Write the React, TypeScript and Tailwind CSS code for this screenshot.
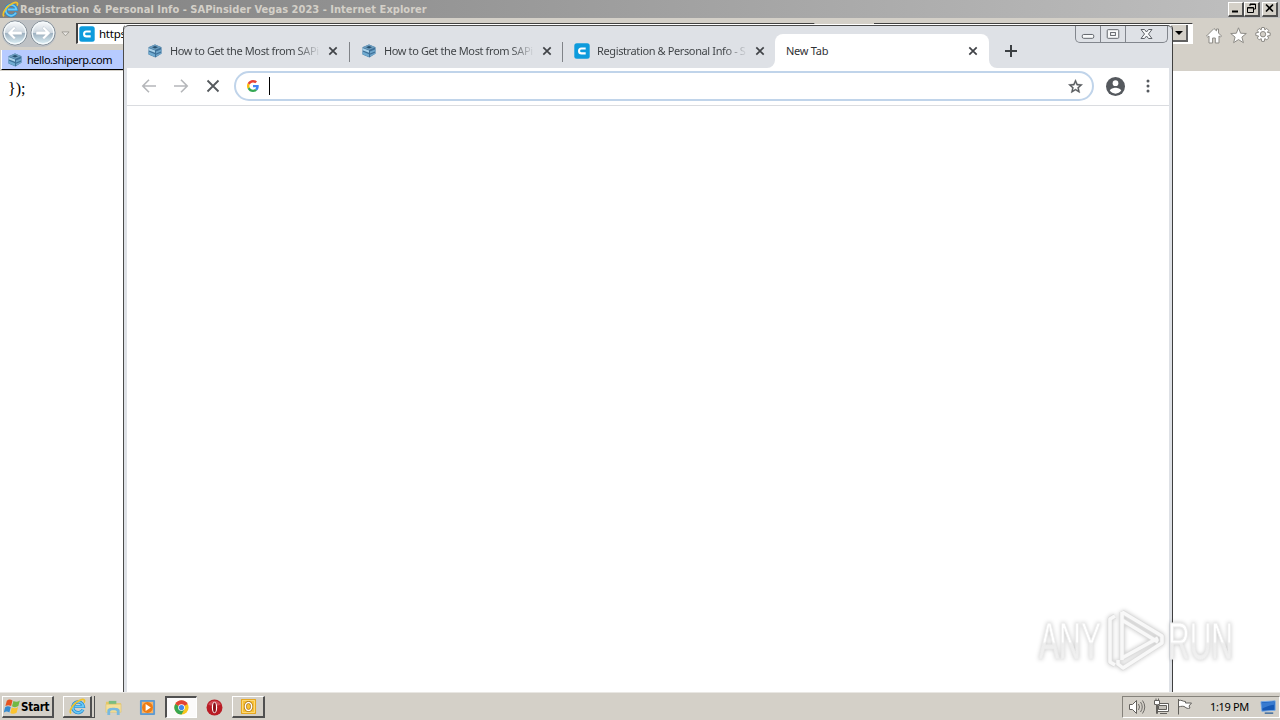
import React from "react";

function Cube() {
  return (
    <svg viewBox="0 0 16 16" className="h-4 w-4 shrink-0">
      <path d="M8 1.500l6.500 2.700v6.400L8.500 14.500 1.500 11.500V4.300z" fill="#3d7098" />
      <path d="M8 1.500l6.500 2.700L8 6.900 1.500 4.300z" fill="#6c9cbe" />
      <path d="M5 4.200l3-1.200 3 1.200-3 1.200z" fill="#27506f" />
      <path d="M1.500 5l6.500 2.600v2.200L1.500 7.200z" fill="#a9d2ea" />
      <path d="M1.500 8.600L8 11.200v2.700l-6.500-2.600z" fill="#6faad0" />
      <path d="M9 8.600l5.500-2.300v1.900L9 10.500zM9 11.800l5.500-2.300v1.300L9 13.800z" fill="#6fa5ca" />
    </svg>
  );
}

function CventIcon() {
  return (
    <svg viewBox="0 0 16 16" className="h-4 w-4 shrink-0">
      <rect x=".3" y=".3" width="15.4" height="15.4" rx="2.5" fill="#0d9bdc" />
      <path d="M11.700 5.500H7.500a2.400 2.400 0 0 0 0 4.900h4.200" fill="none" stroke="#fff" strokeWidth="2.100" />
    </svg>
  );
}

function IeLogo({ className }: { className: string }) {
  return (
    <svg viewBox="0 0 18 18" className={className}>
      <path d="M14.800 12.300a5.700 5.700 0 1 1 .5-3.300H6" fill="none" stroke="#2389cf" strokeWidth="3.400" />
      <path d="M14.800 12.300a5.700 5.700 0 1 1 .5-3.300H6" fill="none" stroke="#6bc9f5" strokeWidth="2" />
      <path d="M2.200 16.300C-1 13.500 5.500 4.500 12 2c4-1.500 5.500.3 3.800 3" fill="none" stroke="#f0c22b" strokeWidth="1.700" />
    </svg>
  );
}

function CloseX() {
  return (
    <svg viewBox="0 0 10 10" className="h-2.5 w-2.5 shrink-0">
      <path d="M1.300 1.300l7.400 7.400M8.700 1.300L1.300 8.700" stroke="#404347" strokeWidth="1.700" />
    </svg>
  );
}

function NavButton({ flip }: { flip?: boolean }) {
  return (
    <svg viewBox="0 0 26 26" className={flip ? "h-[26px] w-[26px] -scale-x-100" : "h-[26px] w-[26px]"}>
      <defs>
        <linearGradient id="nav" x1="0" y1="0" x2="0" y2="1">
          <stop offset="0" stopColor="#fbfcfd" />
          <stop offset=".48" stopColor="#cfd8e0" />
          <stop offset=".52" stopColor="#9fb2c1" />
          <stop offset="1" stopColor="#e3f6fb" />
        </linearGradient>
      </defs>
      <circle cx="13" cy="13" r="12" fill="url(#nav)" stroke="#818b94" />
      <circle cx="13" cy="13" r="10.800" fill="none" stroke="#f5fafc" strokeWidth="1.200" />
      <path d="M5.500 13L12 6.500l1.800 1.800-3 3H20v3.400h-9.200l3 3L12 19.500z" fill="#fff" stroke="#a5b4c0" strokeWidth=".4" />
    </svg>
  );
}

function TitleButton({ children }: { children: React.ReactNode }) {
  return (
    <div className="flex h-[15px] w-4 items-center justify-center border-t border-r-2 border-b-2 border-l border-t-white border-r-[#505050] border-b-[#505050] border-l-white bg-[#d4d0c8]">
      <svg viewBox="0 0 12 11" className="h-[11px] w-3 shrink-0" fill="none" stroke="#000">
        {children}
      </svg>
    </div>
  );
}

function ExplorerWindow() {
  return (
    <div className="flex h-[692px] flex-col bg-white">
      <div className="flex h-[18px] items-center bg-linear-to-r from-[#808080] to-[#c0c0c0] pr-[2px] pl-[2px]">
        <IeLogo className="h-[17px] w-[17px]" />
        <span className="ml-px whitespace-nowrap pt-[2px] font-['DejaVu_Sans_Condensed','DejaVu_Sans',sans-serif] text-[11px] leading-4 font-bold tracking-[0.03px] text-[#d4d0c8]">
          Registration &amp; Personal Info - SAPinsider Vegas 2023 - Internet Explorer
        </span>
        <div className="ml-auto flex">
          <TitleButton><path d="M2 8.500h6" strokeWidth="2" /></TitleButton>
          <TitleButton>
            <path d="M4 3V1h5.500v5H8M4 1.500h5.500" />
            <path d="M1.500 4.500h6v5h-6zM1.500 5h6" />
          </TitleButton>
          <div className="ml-[2px]">
            <TitleButton><path d="M2 1.500l7 7M9 1.500l-7 7" strokeWidth="1.700" /></TitleButton>
          </div>
        </div>
      </div>

      <div className="h-[53px] bg-[#d4d0c8]">
        <div className="flex h-8 items-start pt-[2px] pl-[2px]">
          <div className="flex h-[27px] gap-[2px] rounded-full bg-[#bfc2c5]">
            <NavButton />
            <NavButton flip />
          </div>
          <svg viewBox="0 0 10 6" className="mt-[11px] ml-[5px] h-[6px] w-[9px] shrink-0">
            <path d="M1 .7h8L5 5z" fill="#e8e6e2" stroke="#96938c" strokeWidth=".9" />
          </svg>
          {/* Address box, page tabs, search box */}
          <div className="mt-[3px] ml-[6px] flex h-[21px] w-[739px] shrink-0 items-center border-t border-r border-b border-l-2 border-t-[#404040] border-r-white border-b-white border-l-[#404040] bg-white">
            <span className="ml-px flex"><CventIcon /></span>
            <span className="ml-1 font-['Noto_Sans',sans-serif] text-[11.500px] tracking-[-0.250px] text-black">https</span>
          </div>
          <div className="mt-[4px] ml-px h-5 w-[26px] shrink-0 border-t border-[#f4f4f2] bg-[#bcd3ee]" />
          <div className="mt-[4px] ml-1 h-5 w-[22px] shrink-0 rounded-t-sm border-t border-[#faf9f8] bg-[#dedbd4]" />
          <div className="mt-[3px] ml-[6px] flex h-[21px] w-[319px] shrink-0 items-center border-t border-r border-b border-l-2 border-t-[#404040] border-r-white border-b-white border-l-[#404040] bg-white">
            <div className="mr-[4px] ml-auto flex h-[17px] w-4 items-center justify-center border-r-2 border-b-2 border-r-[#606060] border-b-[#606060] bg-[#d4d0c8]">
              <svg viewBox="0 0 8 4" className="h-1 w-2"><path d="M0 0h8L4 4z" /></svg>
            </div>
          </div>
          <svg viewBox="0 0 70 20" className="mt-[6px] ml-[12px] h-5 w-[70px] shrink-0" fill="#fff" stroke="#8d8b86">
            <path d="M1.500 10L9 2.500l2.500 2.400V3h2v4l3 3-1 1-1.500-1v7h-3.700v-5H7.600v5H4v-7l-1.400 1z" />
            <path d="M33.500 1.800l2.100 5.400 5.700.3-4.400 3.600 1.500 5.600-4.900-3.100-4.900 3.100 1.500-5.600-4.400-3.600 5.700-.3z" />
            <path d="M56.700 1.500h2.600l.5 2.300 2-1.300 1.900 1.900-1.300 2 2.800.5v2.600l-2.800.5 1.300 2-1.900 1.900-2-1.300-.5 2.800h-2.600l-.5-2.800-2 1.300-1.900-1.900 1.300-2-2.800-.5V6.900l2.800-.5-1.300-2 1.900-1.900 2 1.300z" />
            <circle cx="58" cy="8.200" r="2.700" fill="#d4d0c8" />
          </svg>
        </div>
        <div className="ml-px flex h-5 w-[200px] items-center border-b border-l border-black border-l-white bg-[#b7cbff] pl-[5px]">
          <Cube />
          <span className="ml-1 pt-px font-['Noto_Sans',sans-serif] text-[11px] tracking-[-0.450px] text-black">hello.shiperp.com</span>
        </div>
      </div>
      <p className="pt-[8px] pl-2 font-['Liberation_Serif',serif] text-base leading-5 text-black">{"});"}</p>
    </div>
  );
}

interface TabProps {
  title: string;
  icon: React.ReactNode;
  className: string;
}

function ChromeTab({ title, icon, className }: TabProps) {
  return (
    <div className={`flex items-center ${className}`}>
      {icon}
      <span className="ml-[7px] w-[151px] whitespace-nowrap bg-linear-to-r from-[#3c4043] from-84% to-transparent bg-clip-text font-['Noto_Sans',sans-serif] text-[11px] tracking-[-0.380px] text-transparent">
        {title}
      </span>
      <span className="ml-[7px] flex"><CloseX /></span>
    </div>
  );
}

function ChromeWindow() {
  return (
    <div className="absolute top-[24px] left-[123px] flex h-[668px] w-[1050px] flex-col rounded-t-[5px] border-t border-r border-l border-t-white border-r-[#3f3f3f] border-l-[#4b4b4b] bg-[#dee1e6]">
      <div className="flex h-[43px] items-end rounded-t-[5px] border-t border-[#4b4b4b]">
        <ChromeTab className="ml-[23px] h-[34px] w-[202px]" icon={<Cube />} title="How to Get the Most from SAPi" />
        <div className="mb-[6px] h-5 w-px bg-[#808388]" />
        <ChromeTab className="ml-[11px] h-[34px] w-[201px]" icon={<Cube />} title="How to Get the Most from SAPi" />
        <div className="mb-[6px] h-5 w-px bg-[#808388]" />
        <ChromeTab className="ml-[11px] h-[34px] w-[193px]" icon={<CventIcon />} title="Registration & Personal Info - S" />
        <svg viewBox="0 0 8 8" className="h-2 w-2 shrink-0"><path d="M8 0v8H0a8 8 0 0 0 8-8z" fill="#fff" /></svg>
        <div className="flex h-[34px] w-[214px] items-center justify-between rounded-t-lg bg-white pr-[11px] pl-[11px]">
          <span className="font-['Noto_Sans',sans-serif] text-[11px] tracking-[-0.250px] text-[#303236]">New Tab</span>
          <CloseX />
        </div>
        <svg viewBox="0 0 8 8" className="h-2 w-2 shrink-0"><path d="M0 0v8h8a8 8 0 0 1-8-8z" fill="#fff" /></svg>
        <svg viewBox="0 0 12 12" className="mb-[11px] ml-2 h-3 w-3"><path d="M6 0v12M0 6h12" stroke="#3c4043" strokeWidth="2" /></svg>
      </div>

      <div className="mr-[3px] ml-[3px] flex h-[38px] items-center border-b border-[#dadce0] bg-white pb-px pl-[14px]">
        <svg viewBox="0 0 80 16" className="h-4 w-20 shrink-0" fill="none" strokeWidth="1.600">
          <path d="M15 8H2M8 1.800L1.800 8 8 14.200M33 8h13M40 1.800L46.200 8 40 14.200" stroke="#b5b7ba" />
          <path d="M66.500 2.500l11 11M77.500 2.500l-11 11" stroke="#55595d" strokeWidth="1.800" />
        </svg>
        <div className="ml-[13px] flex h-[30px] w-[860px] shrink-0 items-center rounded-full border-2 border-[#c0d4ea] bg-white pr-[8px] pl-[11px]">
          <svg viewBox="0 0 48 48" className="h-[12px] w-[12px]">
            <path fill="#EA4335" d="M24 9.500c3.500 0 6.700 1.200 9.200 3.600l6.900-6.900C35.900 2.400 30.500 0 24 0 14.600 0 6.500 5.400 2.600 13.200l8 6.200C12.400 13.700 17.700 9.500 24 9.500z" />
            <path fill="#4285F4" d="M47 24.600c0-1.600-.2-3.100-.4-4.600H24v9h12.900c-.6 3-2.200 5.500-4.700 7.200l7.700 6C44.400 38 47 31.800 47 24.600z" />
            <path fill="#FBBC05" d="M10.500 28.600c-.5-1.500-.8-3-.8-4.600s.3-3.100.8-4.600l-8-6.200C.9 16.500 0 20.100 0 24s.9 7.500 2.600 10.800z" />
            <path fill="#34A853" d="M24 48c6.500 0 11.900-2.100 15.900-5.800l-7.700-6c-2.200 1.500-4.900 2.300-8.200 2.300-6.300 0-11.600-4.200-13.500-9.900l-8 6.200C6.500 42.600 14.600 48 24 48z" />
          </svg>
          <div className="ml-[10px] h-[18px] w-px bg-black" />
          <svg viewBox="0 0 24 24" className="ml-auto h-[17px] w-[17px]" fill="#55595d" stroke="#55595d" strokeWidth=".5">
            <path d="M22 9.240l-7.190-.62L12 2 9.190 8.630 2 9.240l5.460 4.730L5.820 21 12 17.270 18.180 21l-1.630-7.030L22 9.240zM12 15.400l-3.760 2.270 1-4.280-3.320-2.880 4.380-.38L12 6.100l1.710 4.040 4.380.38-3.320 2.880 1 4.280L12 15.400z" />
          </svg>
        </div>
        <svg viewBox="0 0 20 20" className="ml-[12px] h-[19px] w-[19px] shrink-0">
          <circle cx="10" cy="10" r="10" fill="#55595e" />
          <circle cx="10" cy="6.500" r="3" fill="#fff" />
          <path d="M4 14.300c.2-2 4-3.100 6-3.100s5.800 1.100 6 3.100a7.200 7.200 0 0 1-12 0z" fill="#fff" />
        </svg>
        <svg viewBox="0 0 4 14" className="ml-[21px] h-[14px] w-1 shrink-0" fill="#55595e">
          <circle cx="2" cy="2" r="1.500" />
          <circle cx="2" cy="7" r="1.500" />
          <circle cx="2" cy="12" r="1.500" />
        </svg>
      </div>
      <div className="mr-[3px] ml-[3px] flex-1 bg-white" />

      {/* Caption buttons sit over the tab strip */}
      <div className="absolute top-px right-[4px] flex h-[17px] w-[93px] rounded-b-[5px] border-r border-b border-l border-[#82868d] [&>svg]:h-4">
        <svg viewBox="0 0 25 16" className="w-[25px] border-r border-[#82868d]"><rect x="6.500" y="8.500" width="12" height="4" rx="1.500" fill="#f8f9fa" stroke="#5e6268" /></svg>
        <svg viewBox="0 0 25 16" className="w-[25px] border-r border-[#82868d]" fill="#f8f9fa" stroke="#5e6268"><rect x="6.500" y="3.500" width="12" height="9" rx="1" /><rect x="10" y="6.500" width="5" height="3" /></svg>
        <svg viewBox="0 0 41 16" className="w-[41px]"><path d="M15 3.500h3.500l2 2.500 2-2.500H26L22.500 8l3.500 4.500h-3.500l-2-2.500-2 2.500H15L18.500 8z" fill="#f8f9fa" stroke="#5e6268" /></svg>
      </div>
    </div>
  );
}

function Taskbar() {
  return (
    <div className="relative flex h-7 items-center border-t border-[#e9e7e3] bg-[#d4d0c8] pt-px pl-[2px]">
      <div className="flex h-[22px] w-[52px] items-center border-t border-r-2 border-b-2 border-l border-t-white border-r-[#505050] border-b-[#505050] border-l-white pl-px">
        <svg viewBox="0 0 18 18" className="h-[17px] w-[17px] shrink-0">
          <path d="M3 3c2-2 4-1.500 6-.3L7.500 8.500C5.500 7.300 3.500 7.200 1.500 8.600z" fill="#e65421" />
          <path d="M10 3.200c2.400 1.200 4.500 1 6.800-.5L15.200 8.500c-2.200 1.600-4.500 1.500-6.700.3z" fill="#72b944" />
          <path d="M1.200 9.700c2-1.500 4-1.300 6-.1L5.700 15.300c-2-1.200-4-1.200-6 .2z" fill="#368bd0" />
          <path d="M8.200 10c2.300 1.200 4.500 1.200 6.700-.4l-1.600 5.900c-2.200 1.600-4.400 1.500-6.600.3z" fill="#fbc32f" />
        </svg>
        <span className="pt-[2px] font-['DejaVu_Sans_Condensed','DejaVu_Sans',sans-serif] text-[11.500px] font-bold tracking-[-0.250px] text-black">Start</span>
      </div>
      <div className="ml-[9px] flex h-[22px] w-[32px] border-r border-b border-[#505050]">
        <div className="mr-[2px] flex flex-1 items-center justify-center border-t border-r-2 border-b border-l border-t-white border-r-[#505050] border-b-[#505050] border-l-white">
          <IeLogo className="h-[17px] w-[17px]" />
        </div>
      </div>
      <svg viewBox="0 0 18 18" className="ml-[10px] h-[17px] w-[17px]">
        <path d="M1 3h5l1 1.500h10V13H1z" fill="#e6c765" />
        <path d="M4 2h8v4H4z" fill="#78bd80" />
        <path d="M1 5.500h16V14H1z" fill="#f4df98" stroke="#dfc36b" strokeWidth=".6" />
        <path d="M2.500 17v-5c0-3.500 13-3.500 13 0v5h-3v-4c0-1.600-7-1.600-7 0v4z" fill="#78b9df" />
      </svg>
      <svg viewBox="0 0 18 18" className="ml-[17px] h-[17px] w-[17px]">
        <rect x="1" y="1" width="16" height="16" rx="1" fill="#5d9bd3" />
        <rect x="3" y="3" width="12" height="12" fill="#f7b468" />
        <circle cx="9" cy="9" r="5.700" fill="#ee7c14" />
        <path d="M7 5.300l5.500 3.700L7 12.700z" fill="#fff" />
      </svg>
      <div className="ml-[9px] flex h-[22px] w-8 items-center justify-center border-t-2 border-r border-b border-l-2 border-t-[#505050] border-r-white border-b-white border-l-[#505050] bg-[#fbfafa]">
        <svg viewBox="0 0 18 18" className="h-[15px] w-[15px]">
          <circle cx="9" cy="9" r="8.500" fill="#f8c51d" />
          <path d="M9 9L1.600 4.700A8.500 8.500 0 0 0 9 17.500L12.500 11z" fill="#38a650" />
          <path d="M9 9L1.600 4.700a8.500 8.500 0 0 1 14.800 0z" fill="#e24335" />
          <circle cx="9" cy="9" r="4" fill="#fff" />
          <circle cx="9" cy="9" r="3.100" fill="#4386ed" />
        </svg>
      </div>
      <svg viewBox="0 0 16 16" className="ml-[9px] h-[17px] w-[17px]">
        <circle cx="8" cy="8" r="7.500" fill="#b91c25" />
        <path d="M2 5a7 7 0 0 1 12 0c-2 2-10 2-12 0z" fill="#d04a54" />
        <ellipse cx="8" cy="8" rx="2.500" ry="5.300" fill="#fff" />
        <ellipse cx="8" cy="8" rx="1.400" ry="4.700" fill="#8c1018" />
      </svg>
      <div className="ml-[9px] flex h-[22px] w-[33px] items-center justify-center border-t border-r-2 border-b-2 border-l border-t-white border-r-[#505050] border-b-[#505050] border-l-white">
        <svg viewBox="0 0 18 18" className="h-[17px] w-[17px]">
          <rect x="1" y="1" width="16" height="16" rx="1" fill="#e4a012" />
          <path d="M2.500 2.500h13v13h-13z" fill="#f7c136" stroke="#ffe18a" />
          <ellipse cx="9" cy="9" rx="3.300" ry="4.300" fill="none" stroke="#a86a08" strokeWidth="3" />
          <ellipse cx="9" cy="9" rx="3.300" ry="4.300" fill="none" stroke="#fff" strokeWidth="1.700" />
        </svg>
      </div>

      <div className="ml-auto flex h-[22px] w-[158px] items-center border border-t-[#85827b] border-r-white border-b-white border-l-[#85827b] pl-[5px]">
        <svg viewBox="0 0 68 18" className="h-[18px] w-[68px] shrink-0" fill="#fff" stroke="#62605c">
          <path d="M1.500 6.500h3l4-4v13l-4-4h-3z" />
          <path d="M10.500 6q2 3 0 6M12.500 4q3.500 5 0 10M14.500 2.500q4.500 6.500 0 13" fill="none" strokeWidth=".9" />
          <path d="M28.500 5.500h12v8h-12zM32 15.500h7" />
          <path d="M30.500 7.500h8v4h-8z" fill="#c4c1ba" />
          <path d="M26.500 2.500h5v4h-2v9h-1v-9h-2zM28 .5v2M30.500 .5v2" />
          <path d="M50.500 1v15.500M50.500 2.500c3-1 4 1 7 1v1.500h6l-2.500 3 1 2c-2 1-4 0-5-1s-4-1-6.500 0z" />
        </svg>
        <span className="ml-[14px] font-['Noto_Sans',sans-serif] text-[11px] tracking-[-0.350px] whitespace-nowrap text-black">1:19 PM</span>
        <svg viewBox="0 0 18 16" className="mr-[2px] ml-auto h-4 w-[17px]">
          <path d="M1 2.500l15-1v10l-14 1z" fill="#1558b5" stroke="#74a9e8" />
          <path d="M2 3.500l13-1v3C10 6 5 8 2 10z" fill="#387bd0" />
          <path d="M5 14.500h9" stroke="#37679c" strokeWidth="1.500" />
        </svg>
      </div>
    </div>
  );
}

function Watermark() {
  return (
    <svg viewBox="0 0 220 76" className="absolute top-[602px] left-[1030px] h-[76px] w-[220px] drop-shadow-[0_0_2px_rgba(0,0,0,0.22)]">
      <defs>
        <linearGradient id="mark" x1="0" y1="0" x2="0" y2="1">
          <stop offset=".5" stopColor="#fff" />
          <stop offset=".54" stopColor="#ededed" />
          <stop offset="1" stopColor="#f3f3f3" />
        </linearGradient>
      </defs>
      <g fill="url(#mark)" stroke="#ececec" strokeWidth="1" className="font-['Liberation_Sans_Narrow','Liberation_Sans',sans-serif] text-[51px]">
        <text x="9" y="57" textLength="62" lengthAdjust="spacingAndGlyphs">ANY</text>
        <text x="138" y="57" textLength="65" lengthAdjust="spacingAndGlyphs">RUN</text>
      </g>
      <g fill="none" strokeLinejoin="round">
        <path d="M85 14l-5 3v43l5 3M92 10v48M92 10l40 24v7L93 66l-5-4v-4M92 18l36 22M92 56l36-20" stroke="#dddddd" strokeWidth="5" />
        <path d="M85 14l-5 3v43l5 3M92 10v48M92 10l40 24v7L93 66l-5-4v-4M92 18l36 22M92 56l36-20" stroke="#f8f8f8" strokeWidth="3.500" />
      </g>
    </svg>
  );
}

export default function App() {
  return (
    <div className="relative flex h-[720px] w-[1280px] flex-col overflow-hidden bg-white">
      <ExplorerWindow />
      <ChromeWindow />
      <Taskbar />
      <Watermark />
    </div>
  );
}
